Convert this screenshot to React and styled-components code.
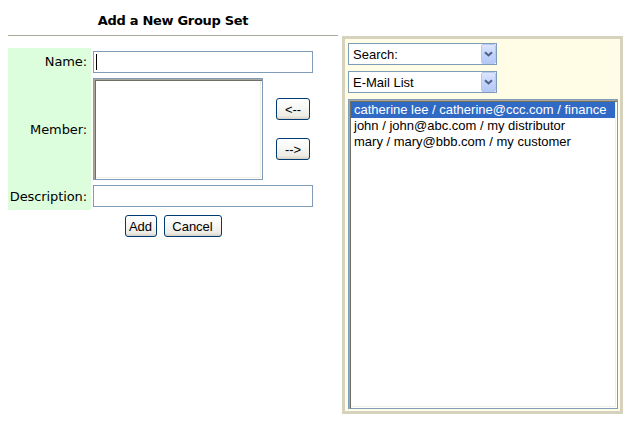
import React from "react";
import styled, { createGlobalStyle } from "styled-components";

const Global = createGlobalStyle`
  html, body { background: #ffffff; }
  body { margin: 8px; font-family: "DejaVu Sans", Verdana, sans-serif; color: #000; }
  * { box-sizing: border-box; }
`;

const Page = styled.div`
  display: grid;
  grid-template-columns: 330px 281px;
  grid-template-rows: 28px auto;
  column-gap: 4px;
  align-items: start;
`;

const Header = styled.div`
  grid-column: 1;
  grid-row: 1;
`;

const Title = styled.h1`
  margin: 0;
  padding: 5px 0 6px;
  font-family: "DejaVu Sans", Verdana, sans-serif;
  font-weight: bold;
  font-size: 13px;
  line-height: 16px;
  letter-spacing: -0.3px;
  text-align: center;
`;

const Rule = styled.div`
  height: 1px;
  background: #aca899;
`;

const LeftCol = styled.div`
  grid-column: 1;
  grid-row: 2;
  padding-top: 12px;
`;

const Form = styled.div`
  display: grid;
  grid-template-columns: 83px auto;
  column-gap: 2px;
  justify-content: start;
`;

const Label = styled.div`
  background: #ddfedd;
  display: flex;
  align-items: center;
  justify-content: flex-end;
  padding-right: 4px;
  font-size: 13px;
  letter-spacing: -0.1px;
  white-space: nowrap;
`;

const Field = styled.div`
  display: flex;
  align-items: center;
  padding: ${(p) => p.$pad};
`;

const TextBox = styled.div`
  width: 220px;
  height: 22px;
  border: 1px solid #7f9db9;
  background: #fff;
  display: flex;
  align-items: center;
  padding-left: 2px;
`;

const Caret = styled.span`
  width: 1px;
  height: 16px;
  background: #000;
`;

const MemberArea = styled.textarea`
  width: 170px;
  height: 102px;
  border: 1px solid #7f9db9;
  box-shadow: inset 1px 1px #aca899, inset 2px 2px #716f64, inset -1px -1px #fff,
    inset -2px -2px #f1efe2;
  resize: none;
  margin: 0;
  padding: 0;
  outline: none;
  background: #fff;
`;

const MoveButtons = styled.div`
  display: flex;
  flex-direction: column;
  gap: 18px;
  margin-left: 13px;
`;

const XpButton = styled.button`
  width: ${(p) => p.$w}px;
  height: 22px;
  margin: 0;
  padding: 0;
  border: 1px solid #003c74;
  border-radius: 3px;
  background: linear-gradient(180deg, #ffffff 0%, #f7f7f4 45%, #ecebe4 85%, #d6d0c5 100%);
  font-family: "Liberation Sans", Arial, sans-serif;
  font-size: 13px;
  color: #000;
  display: flex;
  align-items: center;
  justify-content: center;
`;

const Actions = styled.div`
  display: flex;
  justify-content: center;
  gap: 7px;
  margin-top: 5px;
`;

const Panel = styled.div`
  grid-column: 2;
  grid-row: 2;
  width: 281px;
  height: 378px;
  border: 3px solid #d6d2bd;
  background: #fffde6;
  padding: 4px 2px 2px 3px;
  display: flex;
  flex-direction: column;
  gap: 6px;
`;

const Combo = styled.div`
  width: 149px;
  height: 22px;
  border: 1px solid #7f9db9;
  background: #fff;
  display: flex;
  align-items: center;
  justify-content: space-between;
  padding: 0 0 0 4px;
  font-family: "Liberation Sans", Arial, sans-serif;
  font-size: 13px;
`;

const ComboButton = styled.span`
  width: 15px;
  height: 20px;
  border: 1px solid #b7c8f2;
  border-radius: 2px;
  background: linear-gradient(180deg, #dce6fe 0%, #c3d4fb 50%, #b5c9f7 100%);
  display: flex;
  align-items: center;
  justify-content: center;
`;

const ListBox = styled.div`
  width: 270px;
  height: 310px;
  border: 1px solid #7f9db9;
  background: #fff;
  box-shadow: inset 1px 1px #aca899, inset 2px 2px #716f64, inset -1px -1px #fff,
    inset -2px -2px #f1efe2;
  padding: 2px;
  font-family: "Liberation Sans", Arial, sans-serif;
  font-size: 13px;
`;

const ListItem = styled.div`
  height: 16px;
  line-height: 16px;
  padding-left: 3px;
  white-space: nowrap;
  background: ${(p) => (p.$selected ? "#316ac5" : "transparent")};
  color: ${(p) => (p.$selected ? "#fff" : "#000")};
`;

const Chevron = () => (
  <svg width="9" height="6" viewBox="0 0 9 6">
    <path d="M1 1.2 L4.5 4.5 L8 1.2" fill="none" stroke="#4d6185" strokeWidth="2" />
  </svg>
);

const entries = [
  "catherine lee / catherine@ccc.com / finance",
  "john / john@abc.com / my distributor",
  "mary / mary@bbb.com / my customer",
];

export default function App() {
  return (
    <>
      <Global />
      <Page>
        <Header>
          <Title>Add a New Group Set</Title>
          <Rule />
        </Header>
        <LeftCol>
          <Form>
            <Label>Name:</Label>
            <Field $pad="3px 0 2px">
              <TextBox>
                <Caret />
              </TextBox>
            </Field>
            <Label>Member:</Label>
            <Field $pad="3px 0 3px">
              <MemberArea />
              <MoveButtons>
                <XpButton $w={34}>&lt;--</XpButton>
                <XpButton $w={34}>--&gt;</XpButton>
              </MoveButtons>
            </Field>
            <Label>Description:</Label>
            <Field $pad="2px 0 3px">
              <TextBox />
            </Field>
          </Form>
          <Actions>
            <XpButton $w={32}>Add</XpButton>
            <XpButton $w={58}>Cancel</XpButton>
          </Actions>
        </LeftCol>
        <Panel>
          <Combo>
            Search:
            <ComboButton>
              <Chevron />
            </ComboButton>
          </Combo>
          <Combo>
            E-Mail List
            <ComboButton>
              <Chevron />
            </ComboButton>
          </Combo>
          <ListBox>
            {entries.map((e, i) => (
              <ListItem key={e} $selected={i === 0}>
                {e}
              </ListItem>
            ))}
          </ListBox>
        </Panel>
      </Page>
    </>
  );
}
